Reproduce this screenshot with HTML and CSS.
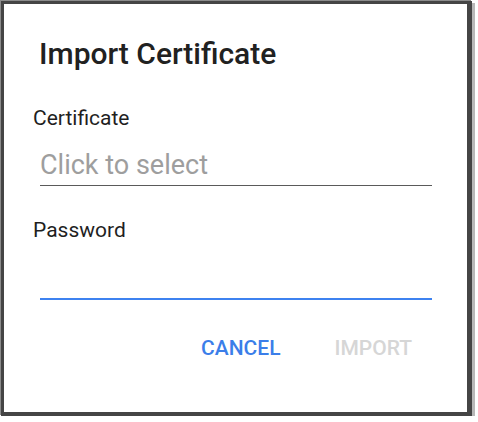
FILE: index.html
```html
<!DOCTYPE html>
<html lang="en">
<head>
    <meta charset="UTF-8">
    <meta name="viewport" content="width=device-width, initial-scale=1.0">
    <title>Import Certificate</title>
    <link rel="stylesheet" href="styles.css">
</head>
<body>
    <div class="dialog">
        <h1 class="dialog-title">Import Certificate</h1>
        <div class="field">
            <label class="field-label">Certificate</label>
            <div class="field-input">
                <span class="placeholder">Click to select</span>
            </div>
        </div>
        <div class="field">
            <label class="field-label">Password</label>
            <div class="field-input focused"></div>
        </div>
        <div class="actions">
            <button class="action-btn">CANCEL</button>
            <button class="action-btn" disabled>IMPORT</button>
        </div>
    </div>
</body>
</html>
```

FILE: styles.css
```css
body, html {
    margin: 0;
    padding: 0;
    background-color: white;
    font-family: Roboto, "Noto Sans", sans-serif;
}
.dialog {
    box-sizing: border-box;
    width: 471px;
    height: 415px;
    margin: 1px 0 0 1px;
    padding: 0 35px 0 29px;
    background: white;
    border-style: solid;
    border-color: #454545;
    border-width: 3px 5px 4px 3px;
    box-shadow: -1px -1px 0 #8c8c8c, 3px 2px 0 #b8b8b8;
}
.dialog-title {
    margin: 0 0 0 6px;
    padding-top: 33px;
    font-size: 30px;
    line-height: 34px;
    font-weight: 500;
    color: #212121;
}
.field {
    display: flex;
    flex-direction: column;
    margin-top: 35px;
}
.field + .field {
    margin-top: 32px;
}
.field-label {
    font-size: 21px;
    line-height: 24px;
    color: #1f1f1f;
}
.field-input {
    margin: 20px 0 0 7px;
    height: 30px;
    padding-bottom: 5px;
    border-bottom: 1px solid #5a5a5a;
    font-size: 27px;
    line-height: 30px;
}
.field-input.focused {
    padding-bottom: 6px;
    border-bottom: 2px solid #3d82f0;
}
.placeholder {
    color: #9e9e9e;
}
.actions {
    display: flex;
    justify-content: flex-end;
    gap: 38px;
    margin-top: 36px;
    padding-right: 12px;
}
.action-btn {
    background: none;
    border: none;
    padding: 0 8px;
    font-family: Roboto, sans-serif;
    font-size: 21px;
    line-height: 24px;
    font-weight: 500;
    color: #3b7ee9;
    cursor: pointer;
}
.action-btn:disabled {
    color: #d6d6d6;
    cursor: default;
}
```
